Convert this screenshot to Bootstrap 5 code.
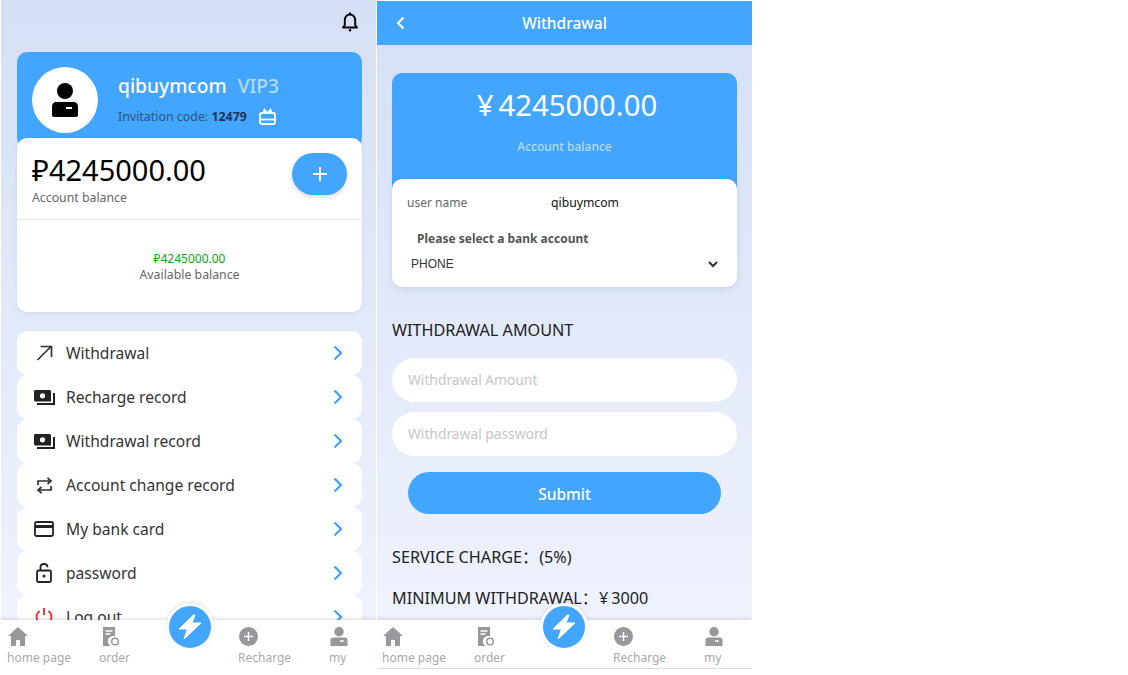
<!DOCTYPE html>
<html lang="en">
<head>
<meta charset="UTF-8">
<title>Withdrawal</title>
<link href="https://cdn.jsdelivr.net/npm/bootstrap@5.3.2/dist/css/bootstrap.min.css" rel="stylesheet">
<style>
  body { background: #fff; font-family: "Noto Sans", "Noto Sans CJK SC", sans-serif; color: #222; }
  .screens { width: 753px; height: 669px; padding-left: 1px; gap: 1px; overflow: hidden; }
  .phone { width: 375px; height: 669px; position: relative; overflow: hidden; flex: none; background: linear-gradient(180deg, #d5dff5 0%, #f0f4fd 100%); }
  .phone-right { height: 668px; margin-top: 1px; }
  .bell-bar { height: 52px; padding: 12px 17px 0 0; }
  .blue-card { background: #42a5ff; border-radius: 10px; }
  .white-card { background: #fff; border-radius: 10px; }
  .profile { margin: 0 14px 0 16px; height: 260px; }
  .profile-head { height: 96px; margin-bottom: -10px; padding: 15px; gap: 20px; }
  .avatar { width: 66px; height: 66px; border-radius: 50%; background: #fff; }
  .name-box { padding-top: 6px; }
  .uname { font-size: 19.200px; line-height: 26px; color: #fff; font-weight: 500; }
  .vip { font-size: 19.200px; line-height: 26px; color: #b5dcff; margin-left: 11px; font-weight: 500; }
  .invite { font-size: 12.400px; color: #2f5578; line-height: 16px; margin-top: 9px; }
  .invite b { color: #1d3650; }
  .balance-box { height: 174px; position: relative; box-shadow: 0 1px 4px rgba(80,110,170,.12); }
  .balance-top { height: 82px; padding: 15px; border-bottom: 1px solid #e4e4e4; }
  .money { font-size: 29px; line-height: 34px; color: #000; }
  .muted-label { font-size: 12.300px; color: #666; line-height: 16px; }
  .money + .muted-label { margin-top: 3px; }
  .plus-btn { width: 55px; height: 42px; border-radius: 21px; background: #42a5ff; color: #fff; box-shadow: 0 2px 5px rgba(0,0,0,.15); }
  .avail-box { padding-top: 31px; }
  .avail { font-size: 12px; line-height: 16px; color: #0aa70a; }
  .menu-list { margin: 19px 14px 0 16px; }
  .menu-row { height: 44px; background: #fff; border-radius: 11px; padding: 0 19px 0 15px; font-size: 15.600px; color: #333; }
  .menu-txt { padding-top: 2px; }
  .menu-ico { width: 34px; padding-right: 10px; flex: none; }
  .tabbar { position: absolute; left: 0; right: 0; bottom: 0; height: 49px; background: #fff; box-shadow: 0 -1px 4px rgba(0,0,0,.14); }
  .phone-right .tabbar { left: -1px; border-bottom: 1px solid #ddd; }
  .tab-item { position: absolute; top: 7px; font-size: 12px; line-height: 16px; color: #a8a8ac; white-space: nowrap; }
  .tab-item svg { display: block; margin: 0 0 4px 1px; }
  .tab-item svg.order-ico { margin-left: 3px; }
  .flash { position: absolute; top: -17px; left: 165px; width: 48px; height: 48px; border-radius: 50%; background: #42a5ff; border: 3px solid #fff; box-shadow: 0 -1px 3px rgba(0,0,0,.12); }
  .phone-right .flash { left: 164px; }
  .top-head { height: 44px; padding-top: 2px; background: #42a5ff; color: #fff; font-size: 15.500px; font-weight: 500; position: relative; }
  .back-ico { position: absolute; left: 19px; top: 15px; }
  .wd-card { margin: 28px 15px 0; height: 214px; }
  .wd-top { height: 116px; padding-top: 13px; border-radius: 10px 10px 0 0; text-align: center; color: #fff; }
  .wd-money { font-size: 29.300px; line-height: 38px; padding-left: 5px; }
  .wd-yen { margin-right: 5px; }
  .wd-label { font-size: 12px; color: #b5dcff; margin-top: 14px; line-height: 18px; font-weight: 500; }
  .wd-form { height: 108px; margin-top: -10px; position: relative; box-shadow: 0 2px 6px rgba(80,110,170,.15); padding: 15px 15px 0; font-size: 12px; }
  .wd-key { width: 144px; color: #666; line-height: 18px; }
  .wd-val { color: #111; line-height: 18px; font-size: 12.200px; }
  .wd-pick { font-weight: 700; color: #555; padding-left: 10px; margin-top: 18px; line-height: 18px; }
  .wd-select { padding: 0 4px 0 4px; margin-top: 7px; line-height: 18px; color: #333; font-family: "Liberation Sans", sans-serif; }
  .wd-title { margin: 33px 15px 18px; font-size: 16.200px; line-height: 20px; color: #222; }
  .wd-input { display: block; width: 345px; height: 44px; margin: 0 15px 10px; border: 0; border-radius: 22px; background: #fff; padding: 0 16px 2px; font-size: 13.800px; font-family: inherit; }
  .wd-input::placeholder { color: #c4c6cc; opacity: 1; }
  .submit-btn { display: block; width: 313px; height: 42px; margin: 16px 31px 33px; padding: 3px 6px 0; border: 0; border-radius: 21px; background: #42a5ff; color: #fff; font-size: 15.500px; font-weight: 500; }
  .note { margin: 0 15px 21px; font-size: 16.200px; line-height: 20px; color: #222; }
  .note-yen { margin: 0 3px 0 1px; }
  .note-gap { margin-left: 1px; }
</style>
</head>
<body>
<div class="screens d-flex">

  <!-- account page -->
  <div class="phone">
    <div class="bell-bar d-flex justify-content-end">
      <svg width="18" height="20" viewBox="0 0 18 20" fill="none" stroke="#000" stroke-width="1.900"><path d="M2 15.500h14l-1.800-2.400V8.400C14.200 5 12 2.500 9 2.500S3.800 5 3.800 8.400v4.700z" stroke-linejoin="round"/><path d="M9 .5v2"/><circle cx="9" cy="18.300" r="1.200" fill="#000" stroke="none"/></svg>
    </div>
    <div class="profile">
      <div class="blue-card profile-head d-flex align-items-start">
        <div class="avatar flex-shrink-0 d-flex align-items-center justify-content-center">
          <svg width="30" height="34" viewBox="0 0 30 34"><circle cx="15" cy="8" r="8"/><path d="M6 19h18c2 0 4 2 4 4v9c0 1-1 2-2 2H4c-1 0-2-1-2-2v-9c0-2 2-4 4-4z"/><rect x="16" y="24" width="6" height="2" fill="#fff"/></svg>
        </div>
        <div class="name-box">
          <div class="d-flex"><span class="uname">qibuymcom</span><span class="vip">VIP3</span></div>
          <div class="invite d-flex align-items-center">Invitation code:&nbsp;<b>12479</b>
            <svg class="ms-2 ps-1" width="21" height="17" viewBox="0 0 17 17" fill="none" stroke="#fff" stroke-width="1.800"><rect x="1" y="5" width="15" height="11" rx="1.800"/><path d="M1 11.500h15"/><path d="M8.500 5 5.500 1.500 4.500 4.500M8.500 5l3-3.500 1 3" stroke-width="1.500"/></svg>
          </div>
        </div>
      </div>
      <div class="white-card balance-box">
        <div class="balance-top d-flex justify-content-between">
          <div>
            <div class="money">₽4245000.00</div>
            <div class="muted-label">Account balance</div>
          </div>
          <div class="plus-btn d-flex align-items-center justify-content-center">
            <svg width="14" height="14" viewBox="0 0 14 14" stroke="#fff" stroke-width="2"><path d="M7 0v14M0 7h14"/></svg>
          </div>
        </div>
        <div class="avail-box text-center">
          <div class="avail">₽4245000.00</div>
          <div class="muted-label">Available balance</div>
        </div>
      </div>
    </div>

    <div class="menu-list" id="menuList"></div>

    <div class="tabbar"></div>
  </div>

  <!-- withdrawal page -->
  <div class="phone phone-right">
    <div class="top-head d-flex align-items-center justify-content-center">
      <svg class="back-ico" width="9" height="14" viewBox="0 0 9 14" fill="none" stroke="#fff" stroke-width="2"><path d="M7.500 1.500 2 7l5.500 5.500"/></svg>
      Withdrawal
    </div>
    <div class="wd-card">
      <div class="blue-card wd-top">
        <div class="wd-money"><span class="wd-yen">¥</span>4245000.00</div>
        <div class="wd-label">Account balance</div>
      </div>
      <div class="white-card wd-form">
        <div class="d-flex"><div class="wd-key">user name</div><div class="wd-val">qibuymcom</div></div>
        <div class="wd-pick">Please select a bank account</div>
        <div class="wd-select d-flex justify-content-between align-items-center">PHONE
          <svg width="10" height="7" viewBox="0 0 10 7" fill="none" stroke="#333" stroke-width="2"><path d="M1 1l4 4 4-4"/></svg>
        </div>
      </div>
    </div>
    <div class="wd-title">WITHDRAWAL AMOUNT</div>
    <input class="wd-input" placeholder="Withdrawal Amount">
    <input class="wd-input" placeholder="Withdrawal password">
    <button class="submit-btn">Submit</button>
    <div class="note">SERVICE CHARGE：<span class="note-gap">(5%)</span></div>
    <div class="note">MINIMUM WITHDRAWAL：<span class="note-yen">¥</span>3000</div>
    <div class="tabbar"></div>
  </div>
</div>

<script src="https://cdn.jsdelivr.net/npm/bootstrap@5.3.2/dist/js/bootstrap.bundle.min.js"></script>
<script>
  const chevron = '<svg width="10" height="16" viewBox="0 0 10 16" fill="none" stroke="#42a0ff" stroke-width="2.200"><path d="M1.500 1.500 8 8l-6.500 6.500"/></svg>';
  const cash = '<svg width="21" height="15" viewBox="0 0 21 15"><path d="M1.500 0h14c.8 0 1.500.7 1.500 1.500V11.500H1.500C.7 11.500 0 10.800 0 10V1.500C0 .7.700 0 1.500 0z" fill="#222"/><circle cx="8.500" cy="5.800" r="2.600" fill="#fff"/><path d="M3 14h17V3" fill="none" stroke="#222" stroke-width="2"/></svg>';
  const menuItems = [
    ['Withdrawal', '<svg width="17" height="16" viewBox="0 0 17 16" fill="none" stroke="#333" stroke-width="1.700"><path d="M1.500 15 15 1.500M4.500 1.500H15.500V12"/></svg>'],
    ['Recharge record', cash],
    ['Withdrawal record', cash],
    ['Account change record', '<svg width="17" height="17" viewBox="0 0 17 17" fill="none" stroke="#333" stroke-width="1.700"><path d="M2 8V4h13M11.500.8 15 4l-3.500 3M15 9v4H2M5.500 10 2 13l3.500 3.200"/></svg>'],
    ['My bank card', '<svg width="20" height="16" viewBox="0 0 20 16" fill="none" stroke="#222" stroke-width="1.800"><rect x="1" y="1" width="18" height="14" rx="1.500"/><path d="M1 5.500h18" stroke-width="3"/></svg>'],
    ['password', '<svg width="16" height="20" viewBox="0 0 16 20" fill="none" stroke="#222" stroke-width="1.800"><rect x="1" y="7.500" width="14" height="11.500" rx="1.500"/><path d="M4.500 7.500V4.200C4.500 2.300 6 1 8 1s3.500 1.300 3.500 3.200"/><circle cx="8" cy="13" r="1.500" fill="#222" stroke="none"/></svg>'],
    ['Log out', '<svg width="18" height="18" viewBox="0 0 18 18" fill="none" stroke="#f22" stroke-width="1.800"><path d="M9 0v7M4.500 3a7.500 7.500 0 1 0 9 0"/></svg>']
  ];
  document.getElementById('menuList').innerHTML = menuItems.map(m =>
    `<div class="menu-row d-flex align-items-center"><span class="menu-ico d-flex justify-content-center">${m[1]}</span><span class="menu-txt flex-grow-1">${m[0]}</span>${chevron}</div>`
  ).join('');

  const tabs = [
    ['home page', 6, '<svg width="20" height="19" viewBox="0 0 20 19" fill="#97979c"><path d="M10 0 0 9h3v10h5v-6h4v6h5V9h3z"/></svg>'],
    ['order', 98, '<svg class="order-ico" width="17" height="19" viewBox="0 0 17 19" fill="#97979c"><path d="M1 0h12v9.500a5 5 0 0 0-4 9.500H1z"/><circle cx="13" cy="14.500" r="3.300" fill="none" stroke="#97979c" stroke-width="1.500"/><path d="M3.500 4h7M3.500 7h5" stroke="#fff" stroke-width="1.300"/></svg>'],
    ['Recharge', 237, '<svg width="19" height="19" viewBox="0 0 19 19"><circle cx="9.500" cy="9.500" r="9.500" fill="#97979c"/><path d="M9.500 5v9M5 9.500h9" stroke="#fff" stroke-width="1.500"/></svg>'],
    ['my', 328, '<svg width="18" height="19" viewBox="0 0 18 20" fill="#97979c"><circle cx="9" cy="5" r="5"/><path d="M3 11h12c2 0 3 1 3 3v6H0v-6c0-2 1-3 3-3z"/><rect x="10" y="14" width="4" height="1.500" fill="#fff"/></svg>']
  ];
  const tabHtml = tabs.map(t =>
    `<div class="tab-item" style="left:${t[1]}px">${t[2]}${t[0]}</div>`
  ).join('') + '<div class="flash d-flex align-items-center justify-content-center"><svg width="24" height="26" viewBox="0 0 24 26" fill="#fff" stroke="#fff" stroke-linejoin="round"><path d="M15.500 1 1 15h8.500L6 25 23 9h-9l3-8z"/></svg></div>';
  document.querySelectorAll('.tabbar').forEach(t => t.innerHTML = tabHtml);
</script>
</body>
</html>
